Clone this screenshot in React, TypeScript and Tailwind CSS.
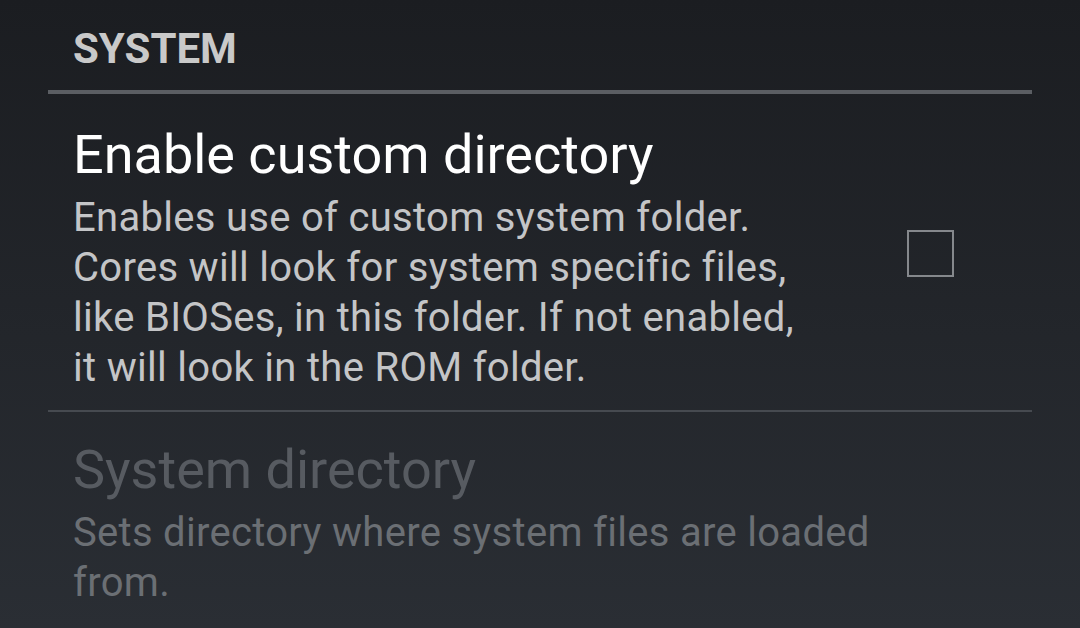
export default function App() {
  return (
    <div
      className="w-[1080px] h-[628px] overflow-hidden bg-gradient-to-b from-[#1b1d21] to-[#2a2e34]"
      style={{ fontFamily: "Roboto, 'Noto Sans', sans-serif" }}
    >
      <div className="px-[48px]">
        {/* section header */}
        <div className="pt-[25px] pl-[25px] text-[42px] leading-[48px] font-bold text-[#c9c9c9]">
          SYSTEM
        </div>
        <div className="mt-[17px] h-[4px] bg-[#5b5e63]" />

        {/* enable custom directory */}
        <div className="flex pl-[25px] pt-[29px] pb-[17px]">
          <div className="flex-1">
            <div className="text-[54px] leading-[64px] text-white">Enable custom directory</div>
            <div className="text-[40px] leading-[50px] tracking-[0.3px] text-[#c4c5c7] mt-[6px]">
              Enables use of custom system folder.
              <br />
              Cores will look for system specific files,
              <br />
              like BIOSes, in this folder. If not enabled,
              <br />
              it will look in the ROM folder.
            </div>
          </div>
          <div className="w-[47px] h-[47px] border-2 border-[#85888c] mr-[78px] mt-[107px]" />
        </div>
        <div className="h-[2px] bg-[#464a50]" />

        {/* system directory (disabled) */}
        <div className="pl-[25px] pt-[26px]">
          <div className="text-[54px] leading-[64px] text-[#575b61]">System directory</div>
          <div className="text-[40px] leading-[50px] tracking-[0.3px] text-[#6b6f74] mt-[6px]">
            Sets directory where system files are loaded
            <br />
            from.
          </div>
        </div>
      </div>
    </div>
  );
}
